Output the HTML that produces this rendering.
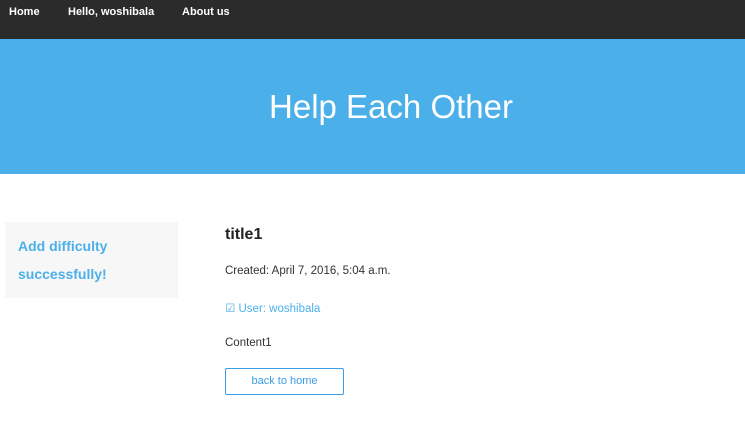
<!DOCTYPE html>
<html><head><style>
body{margin:0;width:745px;height:424px;background:#fff;font-family:"Liberation Sans",sans-serif;overflow:hidden;position:relative}
.nav{position:absolute;left:0;top:0;width:745px;height:39px;background:#2b2b2b}
.nav span{position:absolute;top:6px;color:#fff;font-weight:bold;font-size:11px}
.hero{position:absolute;left:0;top:39px;width:745px;height:135px;background:#4bb0ea;color:#fff;font-size:33px;font-weight:300;text-align:center;line-height:135px;padding-left:37px;box-sizing:border-box}
.side{position:absolute;left:5px;top:222px;width:173px;height:76px;background:#f7f7f7}
.side div{position:absolute;left:13px;top:10px;color:#4bb0ea;font-weight:bold;font-size:14px;line-height:28px}
.t{position:absolute;left:225px;color:#333;font-size:11.5px}
.btn{position:absolute;left:225px;top:368px;width:117px;height:25px;border:1px solid #3a9ee6;border-radius:2px;color:#3a9ee6;font-size:11px;text-align:center;line-height:25px}
</style></head><body>
<div class="nav"><span style="left:9px">Home</span><span style="left:68px">Hello, woshibala</span><span style="left:182px">About us</span></div>
<div class="hero">Help Each Other</div>
<div class="side"><div>Add difficulty<br>successfully!</div></div>
<div class="t" style="top:226px;font-size:16px;font-weight:bold;color:#222">title1</div>
<div class="t" style="top:265px">Created: April 7, 2016, 5:04 a.m.</div>
<div class="t" style="top:301px;color:#4bb0ea">&#9745; User: woshibala</div>
<div class="t" style="top:337px">Content1</div>
<div class="btn">back to home</div>
</body></html>
